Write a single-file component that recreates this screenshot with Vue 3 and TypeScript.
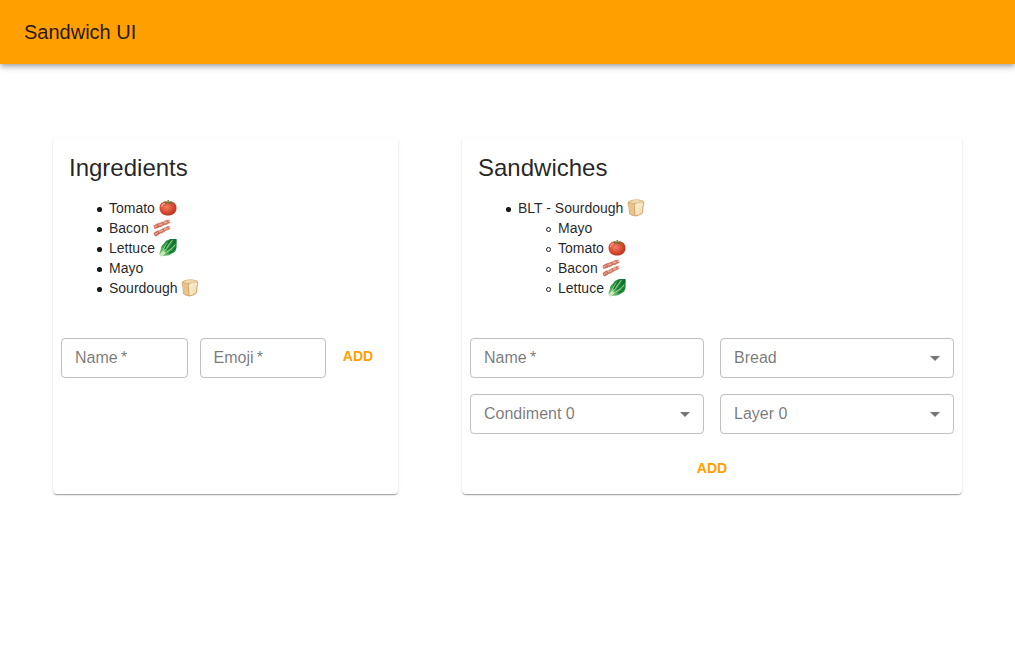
<script setup lang="ts">
import { computed, reactive, ref } from 'vue'

interface Ingredient {
  name: string
  emoji?: string
  icon?: string
}

interface Sandwich {
  name: string
  bread: Ingredient
  layers: Ingredient[]
}

const tomato: Ingredient = { name: 'Tomato', icon: 'tomato' }
const bacon: Ingredient = { name: 'Bacon', icon: 'bacon' }
const lettuce: Ingredient = { name: 'Lettuce', icon: 'lettuce' }
const mayo: Ingredient = { name: 'Mayo' }
const sourdough: Ingredient = { name: 'Sourdough', icon: 'bread' }

const ingredients = ref<Ingredient[]>([tomato, bacon, lettuce, mayo, sourdough])
const sandwiches = ref<Sandwich[]>([
  { name: 'BLT', bread: sourdough, layers: [mayo, tomato, bacon, lettuce] },
])

const newIngredient = reactive({ name: '', emoji: '' })
const newSandwich = reactive({ name: '', bread: '', condiment: '', layer: '' })

type SelectKey = 'bread' | 'condiment' | 'layer'
const selects: { key: SelectKey; label: string }[] = [
  { key: 'bread', label: 'Bread' },
  { key: 'condiment', label: 'Condiment 0' },
  { key: 'layer', label: 'Layer 0' },
]

const names = computed(() => ingredients.value.map((i) => i.name))
const find = (name: string) => ingredients.value.find((i) => i.name === name)

function addIngredient() {
  ingredients.value.push({ name: newIngredient.name, emoji: newIngredient.emoji })
  newIngredient.name = ''
  newIngredient.emoji = ''
}

function addSandwich() {
  const bread = find(newSandwich.bread)
  if (!bread) return
  const layers = [newSandwich.condiment, newSandwich.layer]
    .map(find)
    .filter((i): i is Ingredient => i !== undefined)
  sandwiches.value.push({ name: newSandwich.name, bread, layers })
  Object.assign(newSandwich, { name: '', bread: '', condiment: '', layer: '' })
}
</script>

<template>
  <svg class="sprite" aria-hidden="true">
    <defs>
      <radialGradient id="tomato-skin" cx="0.42" cy="0.4" r="0.65">
        <stop offset="0" stop-color="#f08066" />
        <stop offset="0.5" stop-color="#dc5238" />
        <stop offset="1" stop-color="#b3301a" />
      </radialGradient>
      <linearGradient id="leaf" x1="0" y1="1" x2="1" y2="0">
        <stop offset="0" stop-color="#9ad28c" />
        <stop offset="0.4" stop-color="#37a04e" />
        <stop offset="1" stop-color="#0b6e2c" />
      </linearGradient>
      <linearGradient id="crumb" x1="0" y1="0" x2="1" y2="1">
        <stop offset="0" stop-color="#fbf0da" />
        <stop offset="1" stop-color="#f1d9ac" />
      </linearGradient>
      <linearGradient id="rasher" x1="0" y1="0" x2="0" y2="1">
        <stop offset="0" stop-color="#e09680" />
        <stop offset="1" stop-color="#c8604a" />
      </linearGradient>
      <symbol id="tomato" viewBox="0 0 36 36">
        <path d="M18 6C27 3 35 9 35 18C35 28 27 33 18 33S1 28 1 18C1 9 9 3 18 6Z" fill="url(#tomato-skin)" />
        <path d="M5 15C6 11 8 9 11 9" stroke="#f5a18c" stroke-width="2.500" fill="none" stroke-linecap="round" />
        <path d="M17 6C14 4 11 5 9 7C12 7 13 8 13 10C15 9 17 8 18 8C20 10 22 10 25 10C23 8 24 7 27 6C24 4 21 5 19 6L20 2L17 2Z" fill="#66762e" />
      </symbol>
      <symbol id="bacon" viewBox="0 0 36 36">
        <path d="M1 13C6 11 7 9 11 8C15 8 17 5 21 5C24 1 29 2 33 1L35 8C31 8 29 12 24 12C20 12 19 16 13 16C10 19 6 18 3 20Z" fill="url(#rasher)" />
        <path d="M3 16C8 14 9 12 13 12C17 12 20 8 24 7C28 6 30 5 34 4" stroke="#f0bda9" stroke-width="2" fill="none" />
        <path d="M8 10L12 16M19 6L22 12M28 3L31 8" stroke="#b85643" stroke-width="1.500" fill="none" />
        <path d="M1 28C5 26 7 22 12 23C16 21 18 18 22 18C26 14 30 16 33 13L35 20C31 20 30 23 25 24C21 25 20 29 15 29C11 31 8 34 4 35Z" fill="url(#rasher)" />
        <path d="M4 31C9 28 11 26 15 25C19 24 21 21 25 20C29 19 31 18 34 17" stroke="#f0bda9" stroke-width="2" fill="none" />
        <path d="M9 24L13 30M20 19L23 25M29 15L31 21" stroke="#b85643" stroke-width="1.500" fill="none" />
      </symbol>
      <symbol id="lettuce" viewBox="0 0 36 36">
        <path d="M1 31C0 26 4 23 4 18C4 12 10 11 12 6C14 2 19 3 22 0L35 0C36 4 35 8 35 12C36 17 34 20 33 24C31 28 27 27 23 31C17 35 10 32 5 35Z" fill="url(#leaf)" />
        <path d="M3 32C11 25 18 15 26 3M5 28C9 21 12 14 17 8M9 29C18 26 26 20 32 12" stroke="#a3d996" stroke-width="2" fill="none" stroke-linecap="round" />
        <path d="M12 20C14 14 18 8 22 3M18 21C23 16 29 10 32 5M20 28C26 26 30 22 33 18" stroke="#086026" stroke-width="2" fill="none" />
        <path d="M1 31L9 23L13 29L5 35Z" fill="#cce8b9" />
      </symbol>
      <symbol id="bread" viewBox="0 0 36 36">
        <path d="M2 6C4 3 10 1 17 1C24 1 33 2 34 6C35 9 34 12 33 15L32 27C30 31 23 34 17 35C12 34 6 32 4 29L3 15C1 11 1 9 2 6Z" fill="#d3a464" />
        <path d="M4 6C8 3 12 2 17 2C24 2 30 3 33 5C28 6 21 6 16 9C12 8 7 8 4 6Z" fill="#eed7ad" />
        <path d="M3 8C7 8 12 9 14 11C15 13 14 15 14 18L15 33C11 32 7 30 5 28L4 15C3 12 2 10 3 8Z" fill="#e6c48c" />
        <path d="M16 11C21 8 29 6 32 7C34 9 32 12 31 15L30 27C27 30 22 32 17 33L16 18C16 15 15 13 16 11Z" fill="url(#crumb)" />
      </symbol>
    </defs>
  </svg>

  <header class="app-bar">
    <h1 class="app-title">Sandwich UI</h1>
  </header>

  <main class="board">
    <section class="card ingredients">
      <h2 class="card-title">Ingredients</h2>
      <ul class="list">
        <li v-for="item in ingredients" :key="item.name" class="item">
          {{ item.name }}
          <svg v-if="item.icon" class="emoji" role="img" :aria-label="item.icon"><use :href="'#' + item.icon" /></svg>
          <template v-else>{{ item.emoji }}</template>
        </li>
      </ul>
      <form class="ingredient-form" @submit.prevent="addIngredient">
        <div class="ingredient-fields">
          <div class="field" :class="{ filled: newIngredient.name }">
            <input id="ingredient-name" v-model="newIngredient.name" class="control" type="text" required />
            <label for="ingredient-name" class="label">Name&thinsp;*</label>
          </div>
          <div class="field" :class="{ filled: newIngredient.emoji }">
            <input id="ingredient-emoji" v-model="newIngredient.emoji" class="control" type="text" required />
            <label for="ingredient-emoji" class="label">Emoji&thinsp;*</label>
          </div>
        </div>
        <button class="add" type="submit">ADD</button>
      </form>
    </section>

    <section class="card sandwiches">
      <h2 class="card-title">Sandwiches</h2>
      <ul class="list">
        <li v-for="sandwich in sandwiches" :key="sandwich.name" class="item">
          {{ sandwich.name }} - {{ sandwich.bread.name }}
          <svg v-if="sandwich.bread.icon" class="emoji" role="img" :aria-label="sandwich.bread.icon"><use :href="'#' + sandwich.bread.icon" /></svg>
          <template v-else>{{ sandwich.bread.emoji }}</template>
          <ul class="layers">
            <li v-for="layer in sandwich.layers" :key="layer.name" class="item">
              {{ layer.name }}
              <svg v-if="layer.icon" class="emoji" role="img" :aria-label="layer.icon"><use :href="'#' + layer.icon" /></svg>
              <template v-else>{{ layer.emoji }}</template>
            </li>
          </ul>
        </li>
      </ul>
      <form class="sandwich-form" @submit.prevent="addSandwich">
        <div class="field" :class="{ filled: newSandwich.name }">
          <input id="sandwich-name" v-model="newSandwich.name" class="control" type="text" required />
          <label for="sandwich-name" class="label">Name&thinsp;*</label>
        </div>
        <div v-for="s in selects" :key="s.key" class="field" :class="{ filled: newSandwich[s.key] }">
          <select :id="'sandwich-' + s.key" v-model="newSandwich[s.key]" class="control">
            <option value=""></option>
            <option v-for="name in names" :key="name" :value="name">{{ name }}</option>
          </select>
          <label :for="'sandwich-' + s.key" class="label">{{ s.label }}</label>
          <svg class="arrow" viewBox="0 0 24 24" aria-hidden="true"><path d="M7 10l5 5 5-5z" /></svg>
        </div>
        <button class="add" type="submit">ADD</button>
      </form>
    </section>
  </main>
</template>

<style>
body {
  margin: 0;
  background: #fff;
  color: rgba(0, 0, 0, 0.87);
  font-family: Helvetica, "Liberation Sans", Arial, sans-serif;
  font-size: 14px;
  line-height: 20px;
}
</style>

<style scoped>
.sprite {
  position: absolute;
  width: 0;
  height: 0;
}

.app-bar {
  display: flex;
  align-items: center;
  height: 64px;
  padding: 0 24px;
  background: #ffa000;
  box-shadow:
    0 2px 4px -1px rgba(0, 0, 0, 0.2),
    0 4px 5px 0 rgba(0, 0, 0, 0.14),
    0 1px 10px 0 rgba(0, 0, 0, 0.12);
}

.app-title {
  margin: 0;
  font-size: 20px;
  font-weight: 400;
  line-height: 32px;
}

.board {
  display: flex;
  justify-content: center;
  gap: 64px;
  padding: 74px 32px 32px;
}

.card {
  box-sizing: border-box;
  min-width: 0;
  padding: 16px 8px 8px;
  border-radius: 4px;
  background: #fff;
  box-shadow:
    0 2px 1px -1px rgba(0, 0, 0, 0.2),
    0 1px 1px 0 rgba(0, 0, 0, 0.14),
    0 1px 3px 0 rgba(0, 0, 0, 0.12);
}

.ingredients {
  flex: 0 1 345px;
}

.sandwiches {
  flex: 0 1 500px;
}

.card-title {
  margin: 0 8px;
  font-size: 24px;
  font-weight: 400;
  line-height: 28px;
}

.list {
  margin: 16px 8px 40px;
  padding-left: 40px;
  list-style: none;
}

.layers {
  margin: 0;
  padding-left: 40px;
  list-style: none;
}

/* Round marker hanging in the list's left padding */
.item::before {
  content: "";
  display: inline-block;
  box-sizing: border-box;
  width: 5px;
  height: 5px;
  margin: 0 7px 0 -12px;
  border: 1px solid currentColor;
  border-radius: 50%;
  background: currentColor;
  vertical-align: 1px;
}

.layers .item::before {
  background: transparent;
}

.emoji {
  width: 18px;
  height: 18px;
  vertical-align: -4px;
}

.ingredient-form {
  display: flex;
  align-items: flex-start;
}

.ingredient-fields {
  display: grid;
  flex: 1;
  grid-template-columns: 1fr 1fr;
  gap: 12px;
}

.sandwich-form {
  display: grid;
  grid-template-columns: 1fr 1fr;
  gap: 16px;
}

.sandwich-form .add {
  grid-column: 1 / -1;
  justify-self: center;
}

.field {
  display: grid;
  grid-template-columns: minmax(0, 1fr);
  align-items: center;
}

.field > * {
  grid-area: 1 / 1;
}

.control {
  box-sizing: border-box;
  width: 100%;
  height: 40px;
  margin: 0;
  padding: 0 13px;
  border: 1px solid rgba(0, 0, 0, 0.25);
  border-radius: 4px;
  outline: none;
  appearance: none;
  background: transparent;
  color: inherit;
  font: inherit;
  font-size: 16px;
}

.control:focus {
  border-color: #ffa000;
}

.label {
  justify-self: start;
  margin-left: 14px;
  color: rgba(0, 0, 0, 0.54);
  font-size: 16px;
  pointer-events: none;
}

.filled .label,
.control:focus + .label {
  align-self: start;
  margin-top: -8px;
  margin-left: 10px;
  padding: 0 4px;
  background: #fff;
  font-size: 12px;
  line-height: 16px;
}

.arrow {
  justify-self: end;
  width: 24px;
  height: 24px;
  margin-right: 7px;
  fill: rgba(0, 0, 0, 0.54);
  pointer-events: none;
}

.add {
  min-width: 64px;
  height: 36px;
  padding: 0 8px;
  border: 0;
  border-radius: 4px;
  background: transparent;
  color: #ffa000;
  font: inherit;
  font-weight: 700;
  cursor: pointer;
}

.add:hover {
  background: rgba(255, 160, 0, 0.08);
}

@media (max-width: 800px) {
  .board {
    flex-direction: column;
    align-items: center;
    gap: 32px;
  }

  .card {
    flex: none;
    width: 100%;
    max-width: 500px;
  }
}
</style>
